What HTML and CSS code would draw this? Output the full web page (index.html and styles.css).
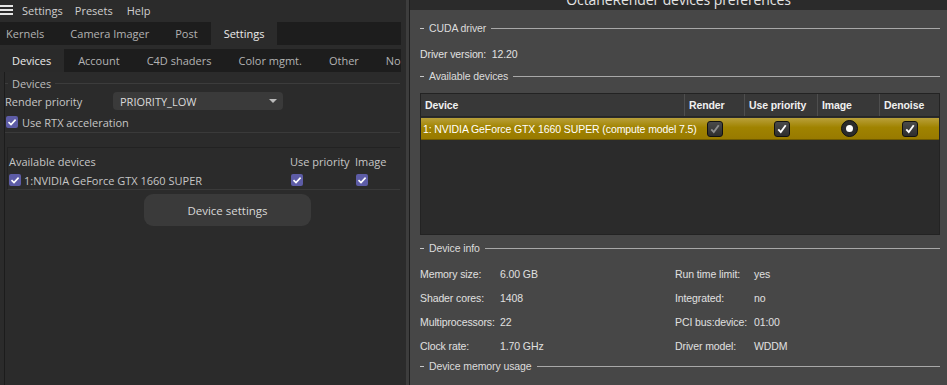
FILE: index.html
```html
<!DOCTYPE html>
<html lang="en">
<head>
    <meta charset="UTF-8">
    <meta name="viewport" content="width=device-width, initial-scale=1.0">
    <title>OctaneRender devices preferences</title>
    <link rel="stylesheet" href="styles.css">
</head>
<body>
<div class="app">
    <!-- Left: Octane settings panel -->
    <div class="left">
        <div class="menubar">
            <span class="burger"><i></i><i></i><i></i></span>
            <span>Settings</span>
            <span>Presets</span>
            <span>Help</span>
        </div>

        <div class="tabs main-tabs">
            <div class="tab first">Kernels</div>
            <div class="tab">Camera Imager</div>
            <div class="tab">Post</div>
            <div class="tab active">Settings</div>
        </div>

        <div class="tabs sub-tabs">
            <div class="tab first active">Devices</div>
            <div class="tab">Account</div>
            <div class="tab">C4D shaders</div>
            <div class="tab">Color mgmt.</div>
            <div class="tab">Other</div>
            <div class="tab">Node</div>
        </div>

        <div class="panel">
            <div class="group-title"><span>Devices</span></div>
            <div class="field-row">
                <span class="field-label">Render priority</span>
                <div class="dropdown">PRIORITY_LOW <span class="arrow"></span></div>
            </div>
            <label class="check-row">
                <span class="pcheck"><svg viewBox="0 0 12 12"><path d="M2.5 6.2 L5 8.6 L9.6 3.6"/></svg></span>
                Use RTX acceleration
            </label>

            <div class="device-box">
                <div class="device-head">
                    <span class="col-name">Available devices</span>
                    <span class="col-prio">Use priority</span>
                    <span class="col-img">Image</span>
                </div>
                <div class="device-line">
                    <span class="col-name">
                        <span class="pcheck"><svg viewBox="0 0 12 12"><path d="M2.5 6.2 L5 8.6 L9.6 3.6"/></svg></span>
                        1:NVIDIA GeForce GTX 1660 SUPER
                    </span>
                    <span class="col-prio"><span class="pcheck"><svg viewBox="0 0 12 12"><path d="M2.5 6.2 L5 8.6 L9.6 3.6"/></svg></span></span>
                    <span class="col-img"><span class="pcheck"><svg viewBox="0 0 12 12"><path d="M2.5 6.2 L5 8.6 L9.6 3.6"/></svg></span></span>
                </div>
            </div>

            <div class="button-row">
                <button class="device-settings">Device settings</button>
            </div>
        </div>
    </div>
    <div class="scroll-strip"></div>

    <!-- Right: devices preferences dialog -->
    <div class="dialog">
        <div class="titlebar"><span>OctaneRender devices preferences</span></div>
        <div class="dialog-body">
            <div class="section cuda">CUDA driver</div>
            <div class="driver">Driver version:&nbsp;&nbsp;12.20</div>
            <div class="section">Available devices</div>

            <div class="device-table">
                <div class="trow thead">
                    <div class="c-dev">Device</div>
                    <div class="c-render">Render</div>
                    <div class="c-prio">Use priority</div>
                    <div class="c-img">Image</div>
                    <div class="c-den">Denoise</div>
                </div>
                <div class="trow selected">
                    <div class="c-dev">1: NVIDIA GeForce GTX 1660 SUPER (compute model 7.5)</div>
                    <div class="c-render"><span class="tcheck dim"><svg viewBox="0 0 15 15"><path d="M3.5 7.8 L6.2 10.8 L11.5 3.5"/></svg></span></div>
                    <div class="c-prio"><span class="tcheck"><svg viewBox="0 0 15 15"><path d="M3.5 7.8 L6.2 10.8 L11.5 3.5"/></svg></span></div>
                    <div class="c-img"><span class="radio"></span></div>
                    <div class="c-den"><span class="tcheck"><svg viewBox="0 0 15 15"><path d="M3.5 7.8 L6.2 10.8 L11.5 3.5"/></svg></span></div>
                </div>
            </div>

            <div class="section info-title">Device info</div>
            <div class="info-grid">
                <span>Memory size:</span><span>6.00 GB</span>
                <span>Run time limit:</span><span>yes</span>
                <span>Shader cores:</span><span>1408</span>
                <span>Integrated:</span><span>no</span>
                <span>Multiprocessors:</span><span>22</span>
                <span>PCI bus:device:</span><span>01:00</span>
                <span>Clock rate:</span><span>1.70 GHz</span>
                <span>Driver model:</span><span>WDDM</span>
            </div>
            <div class="section">Device memory usage</div>
        </div>
    </div>
</div>
</body>
</html>
```

FILE: styles.css
```css
* {
    box-sizing: border-box;
}

body {
    margin: 0;
    width: 947px;
    height: 385px;
    overflow: hidden;
    background: #2b2b2b;
    font-family: "Open Sans", sans-serif;
    font-size: 11px;
    color: #c6c6c6;
}

.app {
    display: flex;
    height: 385px;
}

/* ---------- left panel ---------- */

.left {
    width: 406px;
    flex: none;
    display: flex;
    flex-direction: column;
    background: #2b2b2b;
}

.menubar {
    height: 20px;
    display: flex;
    align-items: center;
    gap: 14px;
    color: #cfcfcf;
}

.burger {
    width: 13px;
    display: flex;
    flex-direction: column;
    gap: 2px;
    margin-right: -5px;
}

.burger i {
    display: block;
    height: 2px;
    background: #e6e6e6;
}

.menubar span:nth-child(3) {
    margin-left: -2px;
}

.tabs {
    display: flex;
    width: 401px;
    height: 23px;
    background: #1d1d1d;
    overflow: hidden;
    white-space: nowrap;
}

.main-tabs {
    margin-top: 2px;
}

.sub-tabs {
    margin-top: 4px;
    gap: 1px;
}

.tab {
    display: flex;
    align-items: center;
    padding: 0 13px;
    color: #b3b3b3;
}

.tab.first {
    padding-left: 6px;
}

.sub-tabs .tab.first {
    padding-left: 12px;
}

.tab.active {
    background: #2b2b2b;
    color: #ececec;
}

.sub-tabs .tab.active {
    background: #2a2a2a;
}

.panel {
    flex: 1;
    margin-left: 4px;
    padding-right: 6px;
    border-left: 1px solid #1c1c1c;
    display: flex;
    flex-direction: column;
}

.group-title {
    margin-top: 4px;
    height: 14px;
    display: flex;
    align-items: center;
    gap: 4px;
    color: #bdbdbd;
}

.group-title::before {
    content: "";
    width: 3px;
    height: 1px;
    background: #3c3c3c;
}

.group-title::after {
    content: "";
    flex: 1;
    height: 1px;
    background: #3c3c3c;
}

.field-row {
    height: 20px;
    margin-top: 1px;
    display: flex;
    align-items: center;
}

.field-label {
    width: 108px;
    color: #c6c6c6;
}

.dropdown {
    width: 170px;
    height: 18px;
    background: #3a3a3a;
    border-radius: 4px;
    display: flex;
    align-items: center;
    justify-content: space-between;
    padding: 0 6px 0 7px;
    color: #dadada;
}

.arrow {
    width: 0;
    height: 0;
    border-left: 4px solid transparent;
    border-right: 4px solid transparent;
    border-top: 4px solid #bbbbbb;
}

.check-row {
    height: 21px;
    margin-top: 1px;
    display: flex;
    align-items: center;
    gap: 4px;
    padding-left: 1px;
    color: #c6c6c6;
    border-bottom: 1px solid #3a3a3a;
}

.pcheck {
    width: 12px;
    height: 12px;
    flex: none;
    border-radius: 2px;
    background: #5d5ca6;
    display: inline-flex;
}

.pcheck svg {
    width: 12px;
    height: 12px;
    fill: none;
    stroke: #ffffff;
    stroke-width: 1.6;
}

.device-box {
    margin-top: 14px;
    margin-left: 2px;
    border-top: 1px solid #222222;
    border-left: 1px solid #222222;
    border-bottom: 1px solid #3a3a3a;
}

.device-head,
.device-line {
    display: flex;
    align-items: center;
    height: 20px;
}

.device-head {
    margin-top: 3px;
}

.device-line {
    height: 18px;
}

.col-name {
    width: 282px;
    display: flex;
    align-items: center;
    gap: 3px;
    padding-left: 1px;
}

.col-prio {
    width: 65px;
    display: flex;
}

.col-img {
    display: flex;
}

.device-line .col-prio,
.device-line .col-img {
    padding-left: 1px;
}

.button-row {
    display: flex;
    padding-left: 139px;
    margin-top: 4px;
}

.device-settings {
    width: 167px;
    height: 32px;
    border: none;
    border-radius: 9px;
    background: #3a3a3a;
    color: #d8d8d8;
    font-family: "Open Sans", sans-serif;
    font-size: 11.5px;
}

.scroll-strip {
    width: 3px;
    flex: none;
    background: #3d3d3d;
    border-right: 1px solid #1e1e1e;
    box-sizing: content-box;
}

/* ---------- right dialog ---------- */

.dialog {
    flex: 1;
    display: flex;
    flex-direction: column;
    background: #474747;
    font-family: "Liberation Sans", Arial, sans-serif;
    font-size: 10.5px;
    letter-spacing: -0.1px;
    color: #e2e2e2;
}

.titlebar {
    height: 10px;
    flex: none;
    background: #2b2b2b;
    overflow: hidden;
    text-align: center;
}

.titlebar span {
    display: block;
    margin-top: -9px;
    font-family: "Open Sans", sans-serif;
    font-size: 14px;
    line-height: 17px;
    color: #e4e4e4;
}

.dialog-body {
    padding: 0 7px 0 10px;
    display: flex;
    flex-direction: column;
}

.section {
    height: 14px;
    display: flex;
    align-items: center;
    gap: 5px;
    color: #dcdcdc;
}

.section::before {
    content: "";
    width: 4px;
    height: 1px;
    background: #c8c8c8;
}

.section::after {
    content: "";
    flex: 1;
    height: 1px;
    background: #a8a8a8;
}

.section.cuda {
    margin-top: 11px;
}

.driver {
    height: 14px;
    margin-top: 12px;
    margin-bottom: 8px;
    display: flex;
    align-items: center;
}

.device-table {
    margin-top: 10px;
    height: 142px;
    background: #2b2b2b;
    border: 1px solid #232323;
}

.trow {
    display: flex;
    height: 22px;
}

.thead {
    background: #383838;
    border-bottom: 1px solid #262626;
    font-weight: bold;
    color: #f0f0f0;
    height: 23px;
}

.thead > div {
    border-right: 1px solid #4e4e4e;
    display: flex;
    align-items: center;
    padding-left: 4px;
}

.thead > div:last-child {
    border-right: none;
}

.c-dev { width: 264px; }
.c-render { width: 60px; }
.c-prio { width: 73px; }
.c-img { width: 62px; }
.c-den { flex: 1; }

.selected {
    margin-top: 1px;
    background: linear-gradient(#b9a03a, #a08300 45%, #987a00);
    color: #ffffff;
    border-bottom: 1px solid #6f5a00;
}

.selected > div {
    display: flex;
    align-items: center;
    justify-content: center;
}

.selected .c-dev {
    justify-content: flex-start;
    padding-left: 2px;
    white-space: nowrap;
}

.tcheck {
    width: 16px;
    height: 16px;
    border-radius: 3px;
    background: linear-gradient(#4a4a4a, #2e2e2e);
    border: 1px solid #111111;
    display: inline-flex;
}

.tcheck svg {
    width: 14px;
    height: 14px;
    fill: none;
    stroke: #ffffff;
    stroke-width: 2;
}

.tcheck.dim svg {
    stroke: #8e8e8e;
}

.radio {
    width: 17px;
    height: 17px;
    border-radius: 50%;
    background: #2c2c2c;
    border: 1px solid #111111;
    display: inline-flex;
    align-items: center;
    justify-content: center;
}

.radio::after {
    content: "";
    width: 7px;
    height: 7px;
    border-radius: 50%;
    background: #ffffff;
}

.info-title {
    margin-top: 6px;
}

.info-grid {
    display: grid;
    grid-template-columns: 80px 175px 79px 1fr;
    grid-auto-rows: 24px;
    align-items: center;
    margin-top: 7px;
    margin-bottom: 1px;
    color: #e0e0e0;
}
```
